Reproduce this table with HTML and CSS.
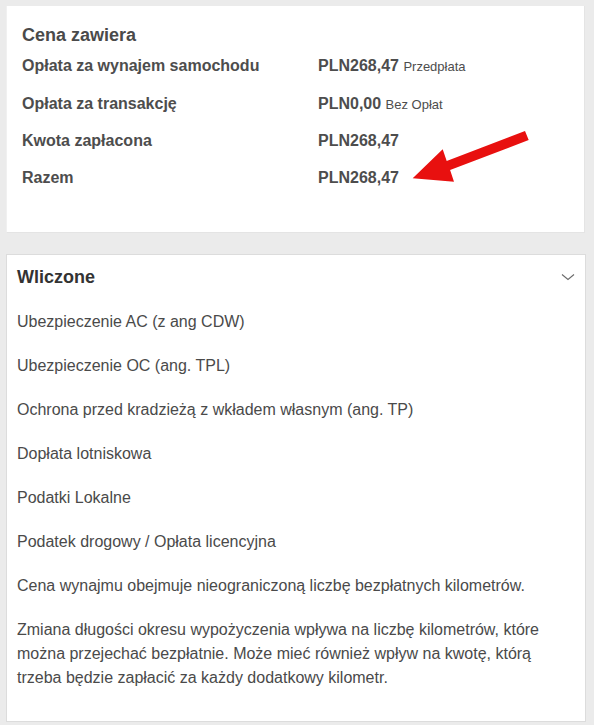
FILE: index.html
```html
<!DOCTYPE html>
<html lang="pl">
<head>
<meta charset="utf-8">
<title>Cena</title>
<link rel="stylesheet" href="styles.css">
</head>
<body>
<div class="page">
  <section class="card summary">
    <h2 class="summary-title">Cena zawiera</h2>
    <div class="rows">
      <div class="label">Opłata za wynajem samochodu</div>
      <div class="value">PLN268,47 <span class="note">Przedpłata</span></div>
      <div class="label">Opłata za transakcję</div>
      <div class="value">PLN0,00 <span class="note">Bez Opłat</span></div>
      <div class="label">Kwota zapłacona</div>
      <div class="value">PLN268,47</div>
      <div class="label">Razem</div>
      <div class="value">PLN268,47</div>
    </div>
    <svg class="arrow" width="134" height="64" viewBox="400 118 134 64" aria-hidden="true">
      <polygon points="524,125 445.7,155 441.7,143.3 411.7,172.3 453,175.7 449.1,164 527.7,134" fill="#e8100f"/>
    </svg>
  </section>

  <section class="card included">
    <div class="included-head">
      <h2 class="included-title">Wliczone</h2>
      <svg class="chevron" width="14" height="8" viewBox="0 0 14 8" aria-hidden="true">
        <polyline points="1,1.5 7,6.5 13,1.5" fill="none" stroke="#6b6b6b" stroke-width="1.1"/>
      </svg>
    </div>
    <ul class="items">
      <li>Ubezpieczenie AC (z ang CDW)</li>
      <li>Ubezpieczenie OC (ang. TPL)</li>
      <li>Ochrona przed kradzieżą z wkładem własnym (ang. TP)</li>
      <li>Dopłata lotniskowa</li>
      <li>Podatki Lokalne</li>
      <li>Podatek drogowy / Opłata licencyjna</li>
      <li>Cena wynajmu obejmuje nieograniczoną liczbę bezpłatnych kilometrów.</li>
      <li>Zmiana długości okresu wypożyczenia wpływa na liczbę kilometrów, które można przejechać bezpłatnie. Może mieć również wpływ na kwotę, którą trzeba będzie zapłacić za każdy dodatkowy kilometr.</li>
    </ul>
  </section>
</div>
</body>
</html>
```

FILE: styles.css
```css
html, body {
  margin: 0;
  padding: 0;
  background: #ebebeb;
}

body {
  font-family: "Liberation Sans", Arial, sans-serif;
  color: #4a4a4a;
}

.page {
  display: flex;
  flex-direction: column;
  gap: 21px;
  padding: 6px 8px 0 6px;
}

.card {
  background: #fff;
  box-sizing: border-box;
}

.summary {
  position: relative;
  height: 227px;
  width: 579px;
  border: 1px solid #e4e4e4;
  border-top: 0;
  border-left-color: #f0f0f0;
  padding: 18px 0 0 15px;
}

.summary-title {
  margin: 0 0 10px;
  font-size: 18px;
  line-height: 22px;
  font-weight: bold;
  color: #4a4a4a;
}

.rows {
  display: grid;
  grid-template-columns: 296px auto;
  row-gap: 16.7px;
  font-size: 16px;
  line-height: 20px;
  font-weight: bold;
}

.label, .value {
  color: #4d4d4d;
}

.note {
  font-weight: normal;
  font-size: 13px;
}

.arrow {
  position: absolute;
  left: 394px;
  top: 118px;
}

.included {
  width: 580px;
  border: 1px solid #dcdcdc;
  padding: 10px 10px 31px 10px;
}

.included-head {
  display: flex;
  justify-content: space-between;
  align-items: center;
}

.included-title {
  margin: 0;
  font-size: 18px;
  line-height: 24px;
  font-weight: bold;
  color: #333;
}

.chevron {
  display: block;
}

.items {
  list-style: none;
  margin: 0;
  padding: 21px 0 0;
  display: flex;
  flex-direction: column;
  gap: 20px;
  font-size: 16px;
  line-height: 24px;
  color: #4a4a4a;
}

.items li {
  margin: 0;
}
```
